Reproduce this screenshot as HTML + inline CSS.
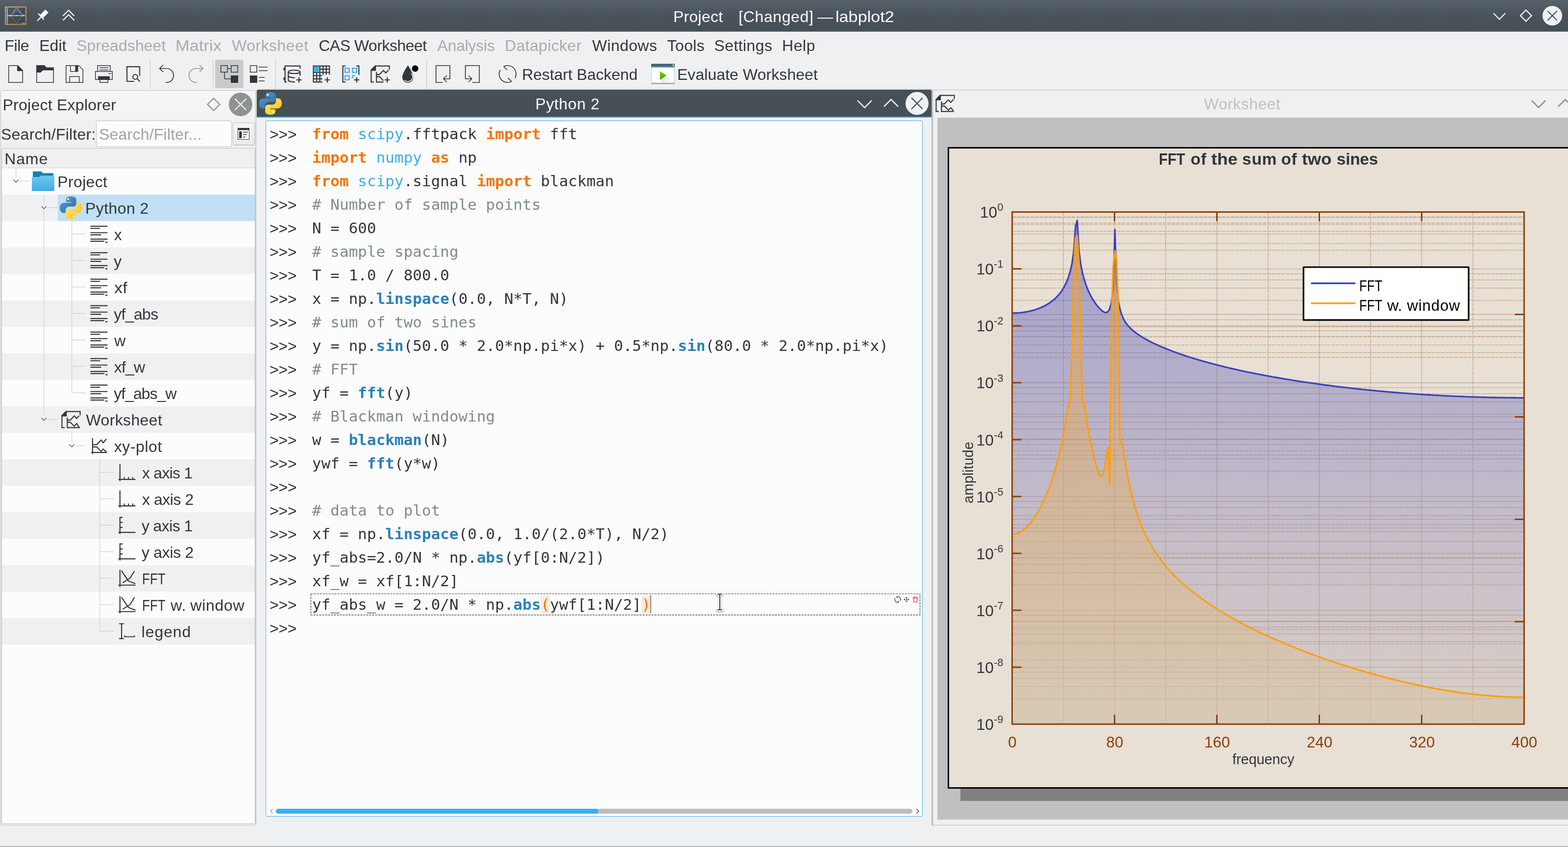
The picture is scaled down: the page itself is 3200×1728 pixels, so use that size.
<!DOCTYPE html><html><head><meta charset="utf-8"><title>Project [Changed] — labplot2</title>
<style>
html,body{margin:0;padding:0;}
body{width:3200px;height:1728px;overflow:hidden;background:#eff0f1;position:relative;}
div,svg.ic,span.t{position:absolute;}
span.t{white-space:pre;line-height:60px;height:60px;}
.fs{font-family:"Liberation Sans", sans-serif;}
.fm{font-family:"DejaVu Sans Mono", "Liberation Mono", monospace;}
sup{font-size:68%;line-height:0;vertical-align:baseline;position:relative;top:-0.64em;letter-spacing:0;}
b{font-weight:bold;}
</style></head><body>
<div id="root" style="left:0;top:0;width:3200px;height:1728px;will-change:transform;overflow:hidden">
<div style="left:0px;top:0px;width:3200px;height:64px;background:linear-gradient(#566169 0%,#4b545c 45%,#475057 85%);"></div>
<div style="left:0px;top:64px;width:3200px;height:1px;background:#3daee9;"></div>
<svg class="ic" style="left:10px;top:13px" width="44" height="38" viewBox="0 0 44 38"><defs><linearGradient id="ai" x1="0" y1="0" x2="1" y2="1"><stop offset="0" stop-color="#535c64"/><stop offset="1" stop-color="#383e45"/></linearGradient><linearGradient id="af" x1="0" y1="0" x2="1" y2="1"><stop offset="0" stop-color="#e0ad5e"/><stop offset="1" stop-color="#b8853e"/></linearGradient></defs><rect x="1.150" y="1.300" width="41.600" height="35.400" fill="url(#ai)" stroke="url(#af)" stroke-width="2.100"/><path d="M4.800 3.200V34.700" stroke="#b3b7ba" stroke-width="2" fill="none"/><path d="M5.5 18.84L6.2 18.81L7.0 18.77L7.8 18.70L8.5 18.61L9.2 18.47L10.0 18.30L10.8 18.06L11.5 17.75L12.2 17.36L13.0 16.87L13.8 16.27L14.5 15.55L15.2 14.72L16.0 13.77L16.8 12.71L17.5 11.57L18.2 10.37L19.0 9.15L19.8 7.96L20.5 6.84L21.2 5.84L22.0 5.01L22.8 4.39L23.5 4.02L24.2 3.90L25.0 4.05L25.8 4.46L26.5 5.11L27.2 5.97L28.0 6.98L28.8 8.12L29.5 9.32L30.2 10.53L31.0 11.72L31.8 12.86L32.5 13.90L33.2 14.84L34.0 15.66L34.8 16.36L35.5 16.94L36.2 17.42L37.0 17.80L37.8 18.10L38.5 18.32L39.2 18.49L40.0 18.62L40.8 18.71" stroke="#cfd2d4" stroke-width="1" fill="none"/><path d="M5.5 18.79L6.2 18.74L7.0 18.68L7.8 18.60L8.5 18.48L9.2 18.34L10.0 18.15L10.8 17.92L11.5 17.64L12.2 17.29L13.0 16.89L13.8 16.41L14.5 15.87L15.2 15.27L16.0 14.60L16.8 13.90L17.5 13.16L18.2 12.40L19.0 11.65L19.8 10.94L20.5 10.28L21.2 9.70L22.0 9.23L22.8 8.88L23.5 8.67L24.2 8.60L25.0 8.69L25.8 8.92L26.5 9.28L27.2 9.77L28.0 10.36L28.8 11.03L29.5 11.75L30.2 12.50L31.0 13.26L31.8 13.99L32.5 14.70L33.2 15.35L34.0 15.95L34.8 16.48L35.5 16.94L36.2 17.34L37.0 17.68L37.8 17.95L38.5 18.18L39.2 18.36L40.0 18.50L40.8 18.61" stroke="#4a90d9" stroke-width="1.300" fill="none"/><path d="M5.5 18.95L6.2 18.98L7.0 19.03L7.8 19.09L8.5 19.18L9.2 19.31L10.0 19.48L10.8 19.70L11.5 20.00L12.2 20.38L13.0 20.85L13.8 21.42L14.5 22.11L15.2 22.92L16.0 23.83L16.8 24.84L17.5 25.94L18.2 27.09L19.0 28.26L19.8 29.40L20.5 30.48L21.2 31.43L22.0 32.23L22.8 32.83L23.5 33.19L24.2 33.30L25.0 33.15L25.8 32.76L26.5 32.14L27.2 31.32L28.0 30.34L28.8 29.25L29.5 28.10L30.2 26.93L31.0 25.79L31.8 24.70L32.5 23.70L33.2 22.80L34.0 22.01L34.8 21.34L35.5 20.78L36.2 20.32L37.0 19.96L37.8 19.67L38.5 19.45L39.2 19.29L40.0 19.17L40.8 19.08" stroke="#8a8f93" stroke-width="1" fill="none"/><path d="M5 18.900H41M11.500 17.800v2.200M24.200 17.800v2.200M37 17.800v2.200" stroke="#e9eaeb" stroke-width="1.300" fill="none"/><rect x="31.900" y="33.300" width="3.900" height="1.500" fill="#2f8fe0"/><rect x="37" y="33.300" width="3.300" height="1.500" fill="#d7d9db"/></svg>
<svg class="ic" style="left:72px;top:16px" width="32" height="32" viewBox="0 0 32 32"><path d="M4 26.500L12.500 18" stroke="#fcfcfc" stroke-width="2.400" fill="none"/><path d="M6 11.500L17.500 24" stroke="#fcfcfc" stroke-width="2.400" fill="none"/><path d="M9.500 14.500L20.500 3.500L27 9.500L16 20.500z" fill="#fcfcfc"/></svg>
<svg class="ic" style="left:124px;top:16px" width="32" height="32" viewBox="0 0 32 32"><path d="M4.500 16.500L16 5L27.500 16.500M4.500 25.500L16 14L27.500 25.500" stroke="#fcfcfc" stroke-width="2.200" fill="none"/></svg>
<span class="t fs" style="top:3.51px;font-size:32px;color:#fcfcfc;letter-spacing:0.266px;left:1374px;">Project</span>
<span class="t fs" style="top:3.51px;font-size:32px;color:#fcfcfc;letter-spacing:0.602px;left:1507.3px;">[Changed]</span>
<span class="t fs" style="top:3.51px;font-size:32px;color:#fcfcfc;left:1668.3px;">—</span>
<span class="t fs" style="top:3.51px;font-size:32px;color:#fcfcfc;left:1705.16px;transform:scaleX(1.0686);transform-origin:0 50%;">labplot2</span>
<svg class="ic" style="left:3040px;top:12px" width="160" height="40" viewBox="0 0 160 40"><path d="M8 15L20 27.500L32 15" stroke="#fcfcfc" stroke-width="2.200" fill="none"/><path d="M74.200 8.500L85.500 20L74.200 31.500L63 20z" stroke="#fcfcfc" stroke-width="2.200" fill="none"/><circle cx="128" cy="20" r="20" fill="#eff0f1"/><path d="M118.500 10.500L137.500 29.500M137.500 10.500L118.500 29.500" stroke="#4a535b" stroke-width="2.200" fill="none"/></svg>
<span class="t fs" style="top:62.61px;font-size:32px;color:#31363b;letter-spacing:-0.555px;left:9.6px;">File</span>
<span class="t fs" style="top:62.61px;font-size:32px;color:#31363b;letter-spacing:0.05px;left:80.2px;">Edit</span>
<span class="t fs" style="top:62.61px;font-size:32px;color:#a8abad;letter-spacing:0.072px;left:156.2px;">Spreadsheet</span>
<span class="t fs" style="top:62.61px;font-size:32px;color:#a8abad;left:358.44px;transform:scaleX(1.0786);transform-origin:0 50%;">Matrix</span>
<span class="t fs" style="top:62.61px;font-size:32px;color:#a8abad;letter-spacing:0.429px;left:473.3px;">Worksheet</span>
<span class="t fs" style="top:62.61px;font-size:32px;color:#31363b;letter-spacing:-0.538px;left:650.5px;">CAS Worksheet</span>
<span class="t fs" style="top:62.61px;font-size:32px;color:#a8abad;letter-spacing:-0.265px;left:892.6px;">Analysis</span>
<span class="t fs" style="top:62.61px;font-size:32px;color:#a8abad;letter-spacing:0.378px;left:1030.2px;">Datapicker</span>
<span class="t fs" style="top:62.61px;font-size:32px;color:#31363b;letter-spacing:0.431px;left:1208.5px;">Windows</span>
<span class="t fs" style="top:62.61px;font-size:32px;color:#31363b;letter-spacing:0.374px;left:1361.6px;">Tools</span>
<span class="t fs" style="top:62.61px;font-size:32px;color:#31363b;letter-spacing:0.396px;left:1457.5px;">Settings</span>
<span class="t fs" style="top:62.61px;font-size:32px;color:#31363b;letter-spacing:0.561px;left:1596px;">Help</span>
<div style="left:305.9px;top:121px;width:1.2px;height:60px;background:#c2c4c6;"></div>
<div style="left:433.9px;top:121px;width:1.2px;height:60px;background:#c2c4c6;"></div>
<div style="left:561.9px;top:121px;width:1.2px;height:60px;background:#c2c4c6;"></div>
<div style="left:869.9px;top:121px;width:1.2px;height:60px;background:#c2c4c6;"></div>
<div style="left:439px;top:122px;width:58px;height:58px;background:#c9cacc;border-radius:3.500px;"></div>
<svg class="ic" style="left:8px;top:127px;" width="48" height="48" viewBox="0 0 32 32"><path d="M6 4v24h20V11l-7-7zm1 1h11v7h7v15H7z" fill="#31363b" fill-rule="evenodd" /></svg>
<svg class="ic" style="left:68px;top:127px;" width="48" height="48" viewBox="0 0 32 32"><path d="M4 4h11l3 3h10v21H4zM5 14v13h22V11H13l-3 3z" fill="#31363b" fill-rule="evenodd" /></svg>
<svg class="ic" style="left:128px;top:127px;" width="48" height="48" viewBox="0 0 32 32"><path d="M4 4H22L28 10V28H4ZM5 5V27H9V19H23V27H27V10.4L21.600 5H21V13H10V5ZM11 5H17V12H11ZM10 20H22V27H10Z" fill="#31363b" fill-rule="evenodd" /></svg>
<svg class="ic" style="left:188px;top:127px;" width="48" height="48" viewBox="0 0 32 32"><path d="M7 4h18v8h-1V5H8v7H7z" fill="#31363b" fill-rule="evenodd" /><path d="M4 12h24v12H4zM5 13v10h3v-4h16v4h3V13z" fill="#31363b" fill-rule="evenodd" /><path d="M10 24h1v3h10v-3h1v4H10z" fill="#31363b" fill-rule="evenodd" /><path d="M10 7h12v1H10zM10 10h12v1H10zM22 15h4v1h-4z" fill="#31363b" fill-rule="evenodd" /></svg>
<svg class="ic" style="left:248px;top:127px;" width="48" height="48" viewBox="0 0 48 48"><path d="M25.900 39H11.050V9.100H37.050V27.800" fill="none" stroke="#31363b" stroke-width="2.1" /><circle cx="28" cy="29.900" r="4.900" fill="none" stroke="#31363b" stroke-width="2.100"/><path d="M31.400 33.300L37.300 39.200" fill="none" stroke="#31363b" stroke-width="2.1" /></svg>
<svg class="ic" style="left:316px;top:127px;" width="48" height="48" viewBox="0 0 32 32"><path d="M11.200 3.800L6.500 8.500L11.200 13.200M6.500 8.500H16A9.500 9.500 0 0 1 16 27.500L14.700 27.400" fill="none" stroke="#31363b" stroke-width="1.15" /></svg>
<svg class="ic" style="left:376px;top:127px;" width="48" height="48" viewBox="0 0 32 32"><g transform="translate(32,0) scale(-1,1)"><path d="M11.200 3.800L6.500 8.500L11.200 13.200M6.500 8.500H16A9.500 9.500 0 0 1 16 27.500L14.700 27.400" fill="none" stroke="#909396" stroke-width="1.15" /></g></svg>
<svg class="ic" style="left:444px;top:127px;" width="48" height="48" viewBox="0 0 32 32"><path d="M4 4h10v10H4zM5 5v8h8V5zM18 4h10v10H18zM19 5v8h8V5zM18 18h10v10H18zM14 8h4v1h-4zM9 14h1v8h8v1H9z" fill="#31363b" fill-rule="evenodd" /></svg>
<svg class="ic" style="left:504px;top:127px;" width="48" height="48" viewBox="0 0 32 32"><path d="M4 4h10v10H4zM5 5v8h8V5zM4 18h10v10H4zM16 6h12v1H16zM16 11h12v1H16zM16 20h8v1h-8zM16 25h8v1h-8z" fill="#31363b" fill-rule="evenodd" /></svg>
<svg class="ic" style="left:572px;top:127px;" width="48" height="48" viewBox="0 0 22 22"><path d="M6 18.500H4.500V3.500H18.500V6" fill="none" stroke="#31363b" stroke-width="1" /><path d="M3 5h1.200v2.700H3zM3 14.100h1.200v2.700H3z" fill="#31363b" fill-rule="evenodd" /><ellipse cx="13" cy="9" rx="5.500" ry="1.550" fill="none" stroke="#31363b" stroke-width="1"/><path d="M7.500 9V16.500C7.500 17.600 10 18.450 13.800 18.450M7.500 12.500C7.500 13.600 10 14.450 13.800 14.450M18.500 9V12.700" fill="none" stroke="#31363b" stroke-width="1" /><path d="M15.0 16.5H20.0M17.5 14.0V19.0" fill="none" stroke="#31363b" stroke-width="1" /></svg>
<svg class="ic" style="left:632px;top:127px;" width="48" height="48" viewBox="0 0 22 22"><path d="M3 3h1V19h-1zM6 9h1V19h-1zM9 3h1V19h-1zM12 3h1V11.7h-1zM15 3h1V11.7h-1zM18 3h1V11.7h-1zM3 3H19v1H3zM9 6H19v1H9zM3 9H19v1H3zM3 12H11.8v1H3zM3 15H11.8v1H3zM3 18H11.8v1H3z" fill="#31363b"/><path d="M4 4h5v5H4z" fill="#3daee9" fill-rule="evenodd" /><path d="M14.0 16.5H19.0M16.5 14.0V19.0" fill="none" stroke="#31363b" stroke-width="1" /></svg>
<svg class="ic" style="left:692px;top:127px;" width="48" height="48" viewBox="0 0 22 22"><path d="M6 3.500H3.500V18.500H6M16.200 3.500H18.500V11.800" fill="none" stroke="#31363b" stroke-width="1" /><path d="M5.550 5.550h3.900v3.900h-3.900zM12.550 5.550h3.900v3.900h-3.900zM5.550 12.550h3.900v3.900h-3.900zM12.550 15V12.550H15" fill="none" stroke="#3daee9" stroke-width="1.1" /><path d="M14.0 16.5H19.0M16.5 14.0V19.0" fill="none" stroke="#31363b" stroke-width="1" /></svg>
<svg class="ic" style="left:752px;top:127px;" width="48" height="48" viewBox="0 0 22 22"><path d="M6 3L2 7v1h5V3z" fill="#31363b" fill-rule="evenodd" /><path d="M6.500 3.500H19.500V7M2.500 7.500V18.500H5" fill="none" stroke="#31363b" stroke-width="1" /><path d="M7.500 9V18.500H14M7.500 11.500H10.200L14 7.700L16.200 10L18.700 7.300M7.500 13.500H10.200L14 17.200" fill="none" stroke="#31363b" stroke-width="1" /><path d="M15.0 16.5H20.0M17.5 14.0V19.0" fill="none" stroke="#31363b" stroke-width="1" /></svg>
<svg class="ic" style="left:812px;top:127px;" width="48" height="48" viewBox="0 0 48 48"><path d="M20.600 6.300C20.600 6.300 9 22.500 9 30.600A11.200 11.200 0 0 0 31.400 30.600C31.400 22.500 20.600 6.300 20.600 6.300Z" fill="#31363b"/><path d="M13.200 36.600A9.600 9.600 0 0 0 27.200 22.600" fill="none" stroke="#eff0f1" stroke-width="1.500"/><circle cx="35.200" cy="12.800" r="6.600" fill="#000"/></svg>
<svg class="ic" style="left:880px;top:127px;" width="48" height="48" viewBox="0 0 32 32"><path d="M16 27.500H6.500V4.500H25.500V22.500H17M21.200 18L16.700 22.500L21.200 27" fill="none" stroke="#31363b" stroke-width="1.1" /></svg>
<svg class="ic" style="left:940px;top:127px;" width="48" height="48" viewBox="0 0 32 32"><path d="M16 27.500H25.500V4.500H6.500V22.500H15M10.800 18L15.300 22.500L10.800 27" fill="none" stroke="#31363b" stroke-width="1.1" /></svg>
<svg class="ic" style="left:1012px;top:127px;" width="48" height="48" viewBox="0 0 32 32"><path d="M10.60 5.85A11.500 11.500 0 0 1 26.01 21.66M21.54 26.08A11.500 11.500 0 0 1 5.97 10.37M10.60 5.85L15.700 10.500M16.400 21.600L21.54 26.08" fill="none" stroke="#31363b" stroke-width="1.1" /></svg>
<svg class="ic" style="left:1329px;top:127px;" width="48" height="48" viewBox="0 0 48 48"><defs><linearGradient id="rg" x1="0" y1="0" x2="0" y2="1"><stop offset="0" stop-color="#72da00"/><stop offset="1" stop-color="#3a9a00"/></linearGradient><linearGradient id="rs" x1="0" y1="0" x2="1" y2="1"><stop offset="0" stop-color="#000" stop-opacity=".16"/><stop offset="1" stop-color="#000" stop-opacity="0"/></linearGradient></defs><rect x="0.700" y="10" width="46.600" height="32.300" fill="#fff" stroke="#cfd4d8" stroke-width="1.400"/><rect x="0" y="3.100" width="48" height="5.800" fill="#525d67"/><rect x="0" y="8.800" width="48" height="2" fill="#3daee9"/><rect x="0" y="42.200" width="48" height="2.600" fill="#a3abb1"/><circle cx="45" cy="5.900" r="1.350" fill="#fcfcfc"/><path d="M17.800 36.100L31.100 27L41 37L35 42.200H24z" fill="url(#rs)"/><path d="M17.800 17.900V36.100L31.100 27z" fill="url(#rg)"/></svg>
<span class="t fs" style="top:121.71px;font-size:32px;color:#31363b;letter-spacing:-0.04px;left:1065.2px;">Restart Backend</span>
<span class="t fs" style="top:121.71px;font-size:32px;color:#31363b;letter-spacing:0.071px;left:1381.9px;">Evaluate Worksheet</span>
<div style="left:1902px;top:183px;width:1300px;height:1px;background:#b9bbbd;"></div>
<div style="left:1902px;top:184px;width:1px;height:1500px;background:#b9bbbd;"></div>
<div style="left:1902px;top:1683px;width:1300px;height:1px;background:#b9bbbd;"></div>
<svg class="ic" style="left:1905px;top:186.5px;" width="48" height="48" viewBox="0 0 22 22"><path d="M6 3L2 7v1h5V3z" fill="#31363b" fill-rule="evenodd" /><path d="M6.500 3.500H19.500V7M2.500 7.500V18.500H5" fill="none" stroke="#31363b" stroke-width="1" /><path d="M7.500 9V18.500H18.500V17.500M7.500 11.500H10.200L14 7.700L16.200 10L18.700 7.300M7.500 13.500H10.200L14 17.200L16.200 15L18.500 17.500" fill="none" stroke="#31363b" stroke-width="1" /></svg>
<span class="t fs" style="top:181.91px;font-size:32px;color:#bcc1c5;letter-spacing:0.466px;left:2456.9px;">Worksheet</span>
<svg class="ic" style="left:3110px;top:187px" width="90" height="48" viewBox="0 0 90 48"><path d="M16 18L30 32.500L44 18" stroke="#8b9194" stroke-width="2.600" fill="none"/><path d="M70 30.500L84.500 16L99 30.500" stroke="#8b9194" stroke-width="2.600" fill="none"/></svg>
<div style="left:1913px;top:240px;width:1287px;height:1432px;background:#c0c0c0;"></div>
<div style="left:1960px;top:1609px;width:1240px;height:25px;background:#808080;"></div>
<div style="left:1934px;top:300px;width:1280px;height:1309px;background:#e8e0d5;border:3px solid #000;box-sizing:border-box;"></div>
<svg class="ic" style="left:0;top:0" width="3200" height="1728" viewBox="0 0 3200 1728"><defs><linearGradient id="gb" gradientUnits="userSpaceOnUse" x1="0" y1="450" x2="0" y2="1477"><stop offset="0" stop-color="rgb(57,63,191)" stop-opacity=".4"/><stop offset="1" stop-color="rgb(196,183,177)" stop-opacity=".4"/></linearGradient><linearGradient id="go" gradientUnits="userSpaceOnUse" x1="0" y1="481" x2="0" y2="1477"><stop offset="0" stop-color="rgb(255,158,13)" stop-opacity=".4"/><stop offset="1" stop-color="rgb(214,192,156)" stop-opacity=".4"/></linearGradient><clipPath id="pc"><rect x="2065.6" y="432.5" width="1044.8000000000002" height="1044.8"/></clipPath></defs><path d="M2065.6 548.6H3110.4M2065.6 664.7H3110.4M2065.6 780.8H3110.4M2065.6 896.9H3110.4M2065.6 1012.9H3110.4M2065.6 1129.0H3110.4M2065.6 1245.1H3110.4M2065.6 1361.2H3110.4M2065.6 641.5H3110.4M2065.6 850.4H3110.4M2065.6 1059.4H3110.4M2065.6 1268.3H3110.4M2274.6 432.5V1477.3M2483.5 432.5V1477.3M2692.5 432.5V1477.3M2901.4 432.5V1477.3M2274.6 432.5V1477.3M2483.5 432.5V1477.3M2692.5 432.5V1477.3M2901.4 432.5V1477.3" stroke="rgba(150,80,20,0.36)" stroke-width="1.400" fill="none"/><path d="M2065.6 442.5H3110.4M2065.6 455.0H3110.4M2065.6 471.7H3110.4M2065.6 496.7H3110.4M2065.6 558.6H3110.4M2065.6 571.1H3110.4M2065.6 587.7H3110.4M2065.6 612.8H3110.4M2065.6 674.7H3110.4M2065.6 687.2H3110.4M2065.6 703.8H3110.4M2065.6 728.9H3110.4M2065.6 790.8H3110.4M2065.6 803.3H3110.4M2065.6 819.9H3110.4M2065.6 844.9H3110.4M2065.6 906.9H3110.4M2065.6 919.4H3110.4M2065.6 936.0H3110.4M2065.6 961.0H3110.4M2065.6 1022.9H3110.4M2065.6 1035.4H3110.4M2065.6 1052.1H3110.4M2065.6 1077.1H3110.4M2065.6 1139.0H3110.4M2065.6 1151.5H3110.4M2065.6 1168.2H3110.4M2065.6 1193.2H3110.4M2065.6 1255.1H3110.4M2065.6 1267.6H3110.4M2065.6 1284.3H3110.4M2065.6 1309.3H3110.4M2065.6 1371.2H3110.4M2065.6 1383.7H3110.4M2065.6 1400.4H3110.4M2065.6 1425.4H3110.4M2065.6 443.6H3110.4M2065.6 457.7H3110.4M2065.6 477.5H3110.4M2065.6 510.5H3110.4M2065.6 652.5H3110.4M2065.6 666.7H3110.4M2065.6 686.5H3110.4M2065.6 719.5H3110.4M2065.6 861.5H3110.4M2065.6 875.6H3110.4M2065.6 895.4H3110.4M2065.6 928.5H3110.4M2065.6 1070.4H3110.4M2065.6 1084.6H3110.4M2065.6 1104.4H3110.4M2065.6 1137.4H3110.4M2065.6 1279.4H3110.4M2065.6 1293.6H3110.4M2065.6 1313.4H3110.4M2065.6 1346.4H3110.4M2170.1 432.5V1477.3M2379.0 432.5V1477.3M2588.0 432.5V1477.3M2797.0 432.5V1477.3M3005.9 432.5V1477.3M2170.1 432.5V1477.3M2379.0 432.5V1477.3M2588.0 432.5V1477.3M2797.0 432.5V1477.3M3005.9 432.5V1477.3" stroke="rgba(150,80,20,0.36)" stroke-width="1.550" stroke-dasharray="7.750 1.550" fill="none"/><g clip-path="url(#pc)"><path d="M2065.6 1477.3L2065.6 638.7L2069.1 638.7L2072.6 638.6L2076.1 638.4L2079.6 638.2L2083.1 637.8L2086.6 637.4L2090.1 637.0L2093.6 636.4L2097.0 635.8L2100.5 635.0L2104.0 634.2L2107.5 633.3L2111.0 632.3L2114.5 631.2L2118.0 630.0L2121.5 628.7L2125.0 627.2L2128.5 625.6L2132.0 623.9L2135.5 622.0L2139.0 619.9L2142.5 617.6L2146.0 615.1L2149.5 612.4L2153.0 609.4L2156.5 606.0L2159.9 602.2L2163.4 598.0L2166.9 593.2L2170.4 587.7L2173.9 581.3L2177.4 573.7L2180.9 564.5L2184.4 552.7L2187.9 536.8L2191.4 512.6L2194.9 461.8L2198.4 449.8L2201.9 510.5L2205.4 537.8L2208.9 555.8L2212.4 569.3L2215.9 580.1L2219.3 589.3L2222.8 597.1L2226.3 604.0L2229.8 610.2L2233.3 615.7L2236.8 620.7L2240.3 625.2L2243.8 629.2L2247.3 632.6L2250.8 635.4L2254.3 637.2L2257.8 637.6L2261.3 635.7L2264.8 629.8L2268.3 616.7L2271.8 588.0L2275.3 468.3L2278.8 577.7L2282.2 612.7L2285.7 630.7L2289.2 642.1L2292.7 650.2L2296.2 656.5L2299.7 661.5L2303.2 665.7L2306.7 669.4L2310.2 672.7L2313.7 675.7L2317.2 678.4L2320.7 681.0L2324.2 683.4L2327.7 685.7L2331.2 687.9L2334.7 689.9L2338.2 691.9L2341.7 693.8L2345.1 695.7L2348.6 697.5L2352.1 699.2L2355.6 700.9L2359.1 702.5L2362.6 704.1L2366.1 705.7L2369.6 707.2L2373.1 708.7L2376.6 710.1L2380.1 711.6L2383.6 713.0L2387.1 714.3L2390.6 715.7L2394.1 717.0L2397.6 718.3L2401.1 719.5L2404.5 720.8L2408.0 722.0L2411.5 723.2L2415.0 724.4L2418.5 725.6L2422.0 726.7L2425.5 727.9L2429.0 729.0L2432.5 730.1L2436.0 731.1L2439.5 732.2L2443.0 733.3L2446.5 734.3L2450.0 735.3L2453.5 736.3L2457.0 737.3L2460.5 738.3L2464.0 739.3L2467.4 740.2L2470.9 741.2L2474.4 742.1L2477.9 743.0L2481.4 743.9L2484.9 744.8L2488.4 745.7L2491.9 746.6L2495.4 747.4L2498.9 748.3L2502.4 749.1L2505.9 750.0L2509.4 750.8L2512.9 751.6L2516.4 752.4L2519.9 753.2L2523.4 754.0L2526.8 754.8L2530.3 755.6L2533.8 756.3L2537.3 757.1L2540.8 757.8L2544.3 758.6L2547.8 759.3L2551.3 760.0L2554.8 760.7L2558.3 761.4L2561.8 762.1L2565.3 762.8L2568.8 763.5L2572.3 764.2L2575.8 764.9L2579.3 765.5L2582.8 766.2L2586.3 766.8L2589.7 767.5L2593.2 768.1L2596.7 768.8L2600.2 769.4L2603.7 770.0L2607.2 770.6L2610.7 771.2L2614.2 771.8L2617.7 772.4L2621.2 773.0L2624.7 773.6L2628.2 774.2L2631.7 774.7L2635.2 775.3L2638.7 775.9L2642.2 776.4L2645.7 777.0L2649.2 777.5L2652.6 778.1L2656.1 778.6L2659.6 779.1L2663.1 779.6L2666.6 780.2L2670.1 780.7L2673.6 781.2L2677.1 781.7L2680.6 782.2L2684.1 782.7L2687.6 783.2L2691.1 783.6L2694.6 784.1L2698.1 784.6L2701.6 785.1L2705.1 785.5L2708.6 786.0L2712.0 786.4L2715.5 786.9L2719.0 787.3L2722.5 787.8L2726.0 788.2L2729.5 788.6L2733.0 789.1L2736.5 789.5L2740.0 789.9L2743.5 790.3L2747.0 790.7L2750.5 791.1L2754.0 791.5L2757.5 791.9L2761.0 792.3L2764.5 792.7L2768.0 793.1L2771.5 793.5L2774.9 793.8L2778.4 794.2L2781.9 794.6L2785.4 794.9L2788.9 795.3L2792.4 795.6L2795.9 796.0L2799.4 796.3L2802.9 796.7L2806.4 797.0L2809.9 797.3L2813.4 797.7L2816.9 798.0L2820.4 798.3L2823.9 798.6L2827.4 799.0L2830.9 799.3L2834.3 799.6L2837.8 799.9L2841.3 800.2L2844.8 800.5L2848.3 800.7L2851.8 801.0L2855.3 801.3L2858.8 801.6L2862.3 801.9L2865.8 802.1L2869.3 802.4L2872.8 802.7L2876.3 802.9L2879.8 803.2L2883.3 803.4L2886.8 803.7L2890.3 803.9L2893.8 804.2L2897.2 804.4L2900.7 804.6L2904.2 804.8L2907.7 805.1L2911.2 805.3L2914.7 805.5L2918.2 805.7L2921.7 805.9L2925.2 806.1L2928.7 806.3L2932.2 806.5L2935.7 806.7L2939.2 806.9L2942.7 807.1L2946.2 807.3L2949.7 807.5L2953.2 807.6L2956.7 807.8L2960.1 808.0L2963.6 808.1L2967.1 808.3L2970.6 808.5L2974.1 808.6L2977.6 808.7L2981.1 808.9L2984.6 809.0L2988.1 809.2L2991.6 809.3L2995.1 809.4L2998.6 809.6L3002.1 809.7L3005.6 809.8L3009.1 809.9L3012.6 810.0L3016.1 810.1L3019.5 810.2L3023.0 810.3L3026.5 810.4L3030.0 810.5L3033.5 810.6L3037.0 810.7L3040.5 810.8L3044.0 810.9L3047.5 810.9L3051.0 811.0L3054.5 811.1L3058.0 811.1L3061.5 811.2L3065.0 811.2L3068.5 811.3L3072.0 811.3L3075.5 811.4L3079.0 811.4L3082.4 811.4L3085.9 811.5L3089.4 811.5L3092.9 811.5L3096.4 811.6L3099.9 811.6L3103.4 811.6L3106.9 811.6L3110.4 811.6L3110.4 1477.3Z" fill="url(#gb)"/><path d="M2065.6 638.7L2069.1 638.7L2072.6 638.6L2076.1 638.4L2079.6 638.2L2083.1 637.8L2086.6 637.4L2090.1 637.0L2093.6 636.4L2097.0 635.8L2100.5 635.0L2104.0 634.2L2107.5 633.3L2111.0 632.3L2114.5 631.2L2118.0 630.0L2121.5 628.7L2125.0 627.2L2128.5 625.6L2132.0 623.9L2135.5 622.0L2139.0 619.9L2142.5 617.6L2146.0 615.1L2149.5 612.4L2153.0 609.4L2156.5 606.0L2159.9 602.2L2163.4 598.0L2166.9 593.2L2170.4 587.7L2173.9 581.3L2177.4 573.7L2180.9 564.5L2184.4 552.7L2187.9 536.8L2191.4 512.6L2194.9 461.8L2198.4 449.8L2201.9 510.5L2205.4 537.8L2208.9 555.8L2212.4 569.3L2215.9 580.1L2219.3 589.3L2222.8 597.1L2226.3 604.0L2229.8 610.2L2233.3 615.7L2236.8 620.7L2240.3 625.2L2243.8 629.2L2247.3 632.6L2250.8 635.4L2254.3 637.2L2257.8 637.6L2261.3 635.7L2264.8 629.8L2268.3 616.7L2271.8 588.0L2275.3 468.3L2278.8 577.7L2282.2 612.7L2285.7 630.7L2289.2 642.1L2292.7 650.2L2296.2 656.5L2299.7 661.5L2303.2 665.7L2306.7 669.4L2310.2 672.7L2313.7 675.7L2317.2 678.4L2320.7 681.0L2324.2 683.4L2327.7 685.7L2331.2 687.9L2334.7 689.9L2338.2 691.9L2341.7 693.8L2345.1 695.7L2348.6 697.5L2352.1 699.2L2355.6 700.9L2359.1 702.5L2362.6 704.1L2366.1 705.7L2369.6 707.2L2373.1 708.7L2376.6 710.1L2380.1 711.6L2383.6 713.0L2387.1 714.3L2390.6 715.7L2394.1 717.0L2397.6 718.3L2401.1 719.5L2404.5 720.8L2408.0 722.0L2411.5 723.2L2415.0 724.4L2418.5 725.6L2422.0 726.7L2425.5 727.9L2429.0 729.0L2432.5 730.1L2436.0 731.1L2439.5 732.2L2443.0 733.3L2446.5 734.3L2450.0 735.3L2453.5 736.3L2457.0 737.3L2460.5 738.3L2464.0 739.3L2467.4 740.2L2470.9 741.2L2474.4 742.1L2477.9 743.0L2481.4 743.9L2484.9 744.8L2488.4 745.7L2491.9 746.6L2495.4 747.4L2498.9 748.3L2502.4 749.1L2505.9 750.0L2509.4 750.8L2512.9 751.6L2516.4 752.4L2519.9 753.2L2523.4 754.0L2526.8 754.8L2530.3 755.6L2533.8 756.3L2537.3 757.1L2540.8 757.8L2544.3 758.6L2547.8 759.3L2551.3 760.0L2554.8 760.7L2558.3 761.4L2561.8 762.1L2565.3 762.8L2568.8 763.5L2572.3 764.2L2575.8 764.9L2579.3 765.5L2582.8 766.2L2586.3 766.8L2589.7 767.5L2593.2 768.1L2596.7 768.8L2600.2 769.4L2603.7 770.0L2607.2 770.6L2610.7 771.2L2614.2 771.8L2617.7 772.4L2621.2 773.0L2624.7 773.6L2628.2 774.2L2631.7 774.7L2635.2 775.3L2638.7 775.9L2642.2 776.4L2645.7 777.0L2649.2 777.5L2652.6 778.1L2656.1 778.6L2659.6 779.1L2663.1 779.6L2666.6 780.2L2670.1 780.7L2673.6 781.2L2677.1 781.7L2680.6 782.2L2684.1 782.7L2687.6 783.2L2691.1 783.6L2694.6 784.1L2698.1 784.6L2701.6 785.1L2705.1 785.5L2708.6 786.0L2712.0 786.4L2715.5 786.9L2719.0 787.3L2722.5 787.8L2726.0 788.2L2729.5 788.6L2733.0 789.1L2736.5 789.5L2740.0 789.9L2743.5 790.3L2747.0 790.7L2750.5 791.1L2754.0 791.5L2757.5 791.9L2761.0 792.3L2764.5 792.7L2768.0 793.1L2771.5 793.5L2774.9 793.8L2778.4 794.2L2781.9 794.6L2785.4 794.9L2788.9 795.3L2792.4 795.6L2795.9 796.0L2799.4 796.3L2802.9 796.7L2806.4 797.0L2809.9 797.3L2813.4 797.7L2816.9 798.0L2820.4 798.3L2823.9 798.6L2827.4 799.0L2830.9 799.3L2834.3 799.6L2837.8 799.9L2841.3 800.2L2844.8 800.5L2848.3 800.7L2851.8 801.0L2855.3 801.3L2858.8 801.6L2862.3 801.9L2865.8 802.1L2869.3 802.4L2872.8 802.7L2876.3 802.9L2879.8 803.2L2883.3 803.4L2886.8 803.7L2890.3 803.9L2893.8 804.2L2897.2 804.4L2900.7 804.6L2904.2 804.8L2907.7 805.1L2911.2 805.3L2914.7 805.5L2918.2 805.7L2921.7 805.9L2925.2 806.1L2928.7 806.3L2932.2 806.5L2935.7 806.7L2939.2 806.9L2942.7 807.1L2946.2 807.3L2949.7 807.5L2953.2 807.6L2956.7 807.8L2960.1 808.0L2963.6 808.1L2967.1 808.3L2970.6 808.5L2974.1 808.6L2977.6 808.7L2981.1 808.9L2984.6 809.0L2988.1 809.2L2991.6 809.3L2995.1 809.4L2998.6 809.6L3002.1 809.7L3005.6 809.8L3009.1 809.9L3012.6 810.0L3016.1 810.1L3019.5 810.2L3023.0 810.3L3026.5 810.4L3030.0 810.5L3033.5 810.6L3037.0 810.7L3040.5 810.8L3044.0 810.9L3047.5 810.9L3051.0 811.0L3054.5 811.1L3058.0 811.1L3061.5 811.2L3065.0 811.2L3068.5 811.3L3072.0 811.3L3075.5 811.4L3079.0 811.4L3082.4 811.4L3085.9 811.5L3089.4 811.5L3092.9 811.5L3096.4 811.6L3099.9 811.6L3103.4 811.6L3106.9 811.6L3110.4 811.6" stroke="#3b41bf" stroke-width="3.300" fill="none" stroke-linejoin="round"/><path d="M2069.1 1477.3L2069.1 1089.9L2072.6 1089.3L2076.1 1088.2L2079.6 1086.8L2083.1 1084.9L2086.6 1082.6L2090.1 1079.9L2093.6 1076.8L2097.0 1073.3L2100.5 1069.5L2104.0 1065.3L2107.5 1060.7L2111.0 1055.7L2114.5 1050.3L2118.0 1044.6L2121.5 1038.4L2125.0 1031.9L2128.5 1024.9L2132.0 1017.5L2135.5 1009.5L2139.0 1001.1L2142.5 992.0L2146.0 982.3L2149.5 972.0L2153.0 960.8L2156.5 948.6L2159.9 935.4L2163.4 921.0L2166.9 905.1L2170.4 887.5L2173.9 867.9L2177.4 846.2L2180.9 823.7L2184.4 813.6L2187.9 706.7L2191.4 543.5L2194.9 484.4L2198.4 481.2L2201.9 532.3L2205.4 674.1L2208.9 818.3L2212.4 821.5L2215.9 844.0L2219.3 866.1L2222.8 886.1L2226.3 904.0L2229.8 920.3L2233.3 934.9L2236.8 948.1L2240.3 959.7L2243.8 968.5L2247.3 972.2L2250.8 967.4L2254.3 953.1L2257.8 932.3L2261.3 911.3L2264.8 990.0L2268.3 644.3L2271.8 543.0L2275.3 511.5L2278.8 532.2L2282.2 615.8L2285.7 899.8L2289.2 902.7L2292.7 920.6L2296.2 942.6L2299.7 962.8L2303.2 981.0L2306.7 997.2L2310.2 1011.8L2313.7 1025.0L2317.2 1037.0L2320.7 1048.0L2324.2 1058.1L2327.7 1067.4L2331.2 1076.0L2334.7 1084.1L2338.2 1091.6L2341.7 1098.6L2345.1 1105.3L2348.6 1111.5L2352.1 1117.5L2355.6 1123.1L2359.1 1128.4L2362.6 1133.5L2366.1 1138.4L2369.6 1143.1L2373.1 1147.6L2376.6 1151.9L2380.1 1156.1L2383.6 1160.2L2387.1 1164.1L2390.6 1167.8L2394.1 1171.5L2397.6 1175.1L2401.1 1178.5L2404.5 1181.9L2408.0 1185.2L2411.5 1188.4L2415.0 1191.5L2418.5 1194.6L2422.0 1197.6L2425.5 1200.5L2429.0 1203.4L2432.5 1206.2L2436.0 1209.0L2439.5 1211.7L2443.0 1214.3L2446.5 1217.0L2450.0 1219.5L2453.5 1222.1L2457.0 1224.5L2460.5 1227.0L2464.0 1229.4L2467.4 1231.8L2470.9 1234.1L2474.4 1236.4L2477.9 1238.7L2481.4 1240.9L2484.9 1243.1L2488.4 1245.3L2491.9 1247.4L2495.4 1249.6L2498.9 1251.7L2502.4 1253.7L2505.9 1255.8L2509.4 1257.8L2512.9 1259.8L2516.4 1261.8L2519.9 1263.7L2523.4 1265.6L2526.8 1267.5L2530.3 1269.4L2533.8 1271.3L2537.3 1273.1L2540.8 1275.0L2544.3 1276.8L2547.8 1278.6L2551.3 1280.3L2554.8 1282.1L2558.3 1283.8L2561.8 1285.6L2565.3 1287.3L2568.8 1289.0L2572.3 1290.6L2575.8 1292.3L2579.3 1293.9L2582.8 1295.6L2586.3 1297.2L2589.7 1298.8L2593.2 1300.3L2596.7 1301.9L2600.2 1303.5L2603.7 1305.0L2607.2 1306.5L2610.7 1308.1L2614.2 1309.6L2617.7 1311.1L2621.2 1312.5L2624.7 1314.0L2628.2 1315.5L2631.7 1316.9L2635.2 1318.3L2638.7 1319.8L2642.2 1321.2L2645.7 1322.6L2649.2 1323.9L2652.6 1325.3L2656.1 1326.7L2659.6 1328.0L2663.1 1329.4L2666.6 1330.7L2670.1 1332.0L2673.6 1333.4L2677.1 1334.7L2680.6 1336.0L2684.1 1337.2L2687.6 1338.5L2691.1 1339.8L2694.6 1341.0L2698.1 1342.3L2701.6 1343.5L2705.1 1344.7L2708.6 1345.9L2712.0 1347.1L2715.5 1348.3L2719.0 1349.5L2722.5 1350.7L2726.0 1351.9L2729.5 1353.0L2733.0 1354.2L2736.5 1355.3L2740.0 1356.5L2743.5 1357.6L2747.0 1358.7L2750.5 1359.8L2754.0 1360.9L2757.5 1362.0L2761.0 1363.1L2764.5 1364.2L2768.0 1365.2L2771.5 1366.3L2774.9 1367.3L2778.4 1368.4L2781.9 1369.4L2785.4 1370.4L2788.9 1371.4L2792.4 1372.4L2795.9 1373.4L2799.4 1374.4L2802.9 1375.4L2806.4 1376.4L2809.9 1377.3L2813.4 1378.3L2816.9 1379.2L2820.4 1380.2L2823.9 1381.1L2827.4 1382.0L2830.9 1382.9L2834.3 1383.8L2837.8 1384.7L2841.3 1385.6L2844.8 1386.5L2848.3 1387.3L2851.8 1388.2L2855.3 1389.0L2858.8 1389.9L2862.3 1390.7L2865.8 1391.5L2869.3 1392.3L2872.8 1393.1L2876.3 1393.9L2879.8 1394.7L2883.3 1395.5L2886.8 1396.2L2890.3 1397.0L2893.8 1397.7L2897.2 1398.5L2900.7 1399.2L2904.2 1399.9L2907.7 1400.6L2911.2 1401.3L2914.7 1402.0L2918.2 1402.7L2921.7 1403.4L2925.2 1404.0L2928.7 1404.7L2932.2 1405.3L2935.7 1405.9L2939.2 1406.5L2942.7 1407.1L2946.2 1407.7L2949.7 1408.3L2953.2 1408.9L2956.7 1409.5L2960.1 1410.0L2963.6 1410.5L2967.1 1411.1L2970.6 1411.6L2974.1 1412.1L2977.6 1412.6L2981.1 1413.1L2984.6 1413.6L2988.1 1414.0L2991.6 1414.5L2995.1 1414.9L2998.6 1415.3L3002.1 1415.7L3005.6 1416.2L3009.1 1416.5L3012.6 1416.9L3016.1 1417.3L3019.5 1417.6L3023.0 1418.0L3026.5 1418.3L3030.0 1418.6L3033.5 1418.9L3037.0 1419.2L3040.5 1419.5L3044.0 1419.8L3047.5 1420.0L3051.0 1420.3L3054.5 1420.5L3058.0 1420.7L3061.5 1420.9L3065.0 1421.1L3068.5 1421.3L3072.0 1421.5L3075.5 1421.6L3079.0 1421.7L3082.4 1421.9L3085.9 1422.0L3089.4 1422.1L3092.9 1422.2L3096.4 1422.2L3099.9 1422.3L3103.4 1422.4L3106.9 1422.4L3110.4 1422.4L3110.4 1477.3Z" fill="url(#go)"/><path d="M2069.1 1089.9L2072.6 1089.3L2076.1 1088.2L2079.6 1086.8L2083.1 1084.9L2086.6 1082.6L2090.1 1079.9L2093.6 1076.8L2097.0 1073.3L2100.5 1069.5L2104.0 1065.3L2107.5 1060.7L2111.0 1055.7L2114.5 1050.3L2118.0 1044.6L2121.5 1038.4L2125.0 1031.9L2128.5 1024.9L2132.0 1017.5L2135.5 1009.5L2139.0 1001.1L2142.5 992.0L2146.0 982.3L2149.5 972.0L2153.0 960.8L2156.5 948.6L2159.9 935.4L2163.4 921.0L2166.9 905.1L2170.4 887.5L2173.9 867.9L2177.4 846.2L2180.9 823.7L2184.4 813.6L2187.9 706.7L2191.4 543.5L2194.9 484.4L2198.4 481.2L2201.9 532.3L2205.4 674.1L2208.9 818.3L2212.4 821.5L2215.9 844.0L2219.3 866.1L2222.8 886.1L2226.3 904.0L2229.8 920.3L2233.3 934.9L2236.8 948.1L2240.3 959.7L2243.8 968.5L2247.3 972.2L2250.8 967.4L2254.3 953.1L2257.8 932.3L2261.3 911.3L2264.8 990.0L2268.3 644.3L2271.8 543.0L2275.3 511.5L2278.8 532.2L2282.2 615.8L2285.7 899.8L2289.2 902.7L2292.7 920.6L2296.2 942.6L2299.7 962.8L2303.2 981.0L2306.7 997.2L2310.2 1011.8L2313.7 1025.0L2317.2 1037.0L2320.7 1048.0L2324.2 1058.1L2327.7 1067.4L2331.2 1076.0L2334.7 1084.1L2338.2 1091.6L2341.7 1098.6L2345.1 1105.3L2348.6 1111.5L2352.1 1117.5L2355.6 1123.1L2359.1 1128.4L2362.6 1133.5L2366.1 1138.4L2369.6 1143.1L2373.1 1147.6L2376.6 1151.9L2380.1 1156.1L2383.6 1160.2L2387.1 1164.1L2390.6 1167.8L2394.1 1171.5L2397.6 1175.1L2401.1 1178.5L2404.5 1181.9L2408.0 1185.2L2411.5 1188.4L2415.0 1191.5L2418.5 1194.6L2422.0 1197.6L2425.5 1200.5L2429.0 1203.4L2432.5 1206.2L2436.0 1209.0L2439.5 1211.7L2443.0 1214.3L2446.5 1217.0L2450.0 1219.5L2453.5 1222.1L2457.0 1224.5L2460.5 1227.0L2464.0 1229.4L2467.4 1231.8L2470.9 1234.1L2474.4 1236.4L2477.9 1238.7L2481.4 1240.9L2484.9 1243.1L2488.4 1245.3L2491.9 1247.4L2495.4 1249.6L2498.9 1251.7L2502.4 1253.7L2505.9 1255.8L2509.4 1257.8L2512.9 1259.8L2516.4 1261.8L2519.9 1263.7L2523.4 1265.6L2526.8 1267.5L2530.3 1269.4L2533.8 1271.3L2537.3 1273.1L2540.8 1275.0L2544.3 1276.8L2547.8 1278.6L2551.3 1280.3L2554.8 1282.1L2558.3 1283.8L2561.8 1285.6L2565.3 1287.3L2568.8 1289.0L2572.3 1290.6L2575.8 1292.3L2579.3 1293.9L2582.8 1295.6L2586.3 1297.2L2589.7 1298.8L2593.2 1300.3L2596.7 1301.9L2600.2 1303.5L2603.7 1305.0L2607.2 1306.5L2610.7 1308.1L2614.2 1309.6L2617.7 1311.1L2621.2 1312.5L2624.7 1314.0L2628.2 1315.5L2631.7 1316.9L2635.2 1318.3L2638.7 1319.8L2642.2 1321.2L2645.7 1322.6L2649.2 1323.9L2652.6 1325.3L2656.1 1326.7L2659.6 1328.0L2663.1 1329.4L2666.6 1330.7L2670.1 1332.0L2673.6 1333.4L2677.1 1334.7L2680.6 1336.0L2684.1 1337.2L2687.6 1338.5L2691.1 1339.8L2694.6 1341.0L2698.1 1342.3L2701.6 1343.5L2705.1 1344.7L2708.6 1345.9L2712.0 1347.1L2715.5 1348.3L2719.0 1349.5L2722.5 1350.7L2726.0 1351.9L2729.5 1353.0L2733.0 1354.2L2736.5 1355.3L2740.0 1356.5L2743.5 1357.6L2747.0 1358.7L2750.5 1359.8L2754.0 1360.9L2757.5 1362.0L2761.0 1363.1L2764.5 1364.2L2768.0 1365.2L2771.5 1366.3L2774.9 1367.3L2778.4 1368.4L2781.9 1369.4L2785.4 1370.4L2788.9 1371.4L2792.4 1372.4L2795.9 1373.4L2799.4 1374.4L2802.9 1375.4L2806.4 1376.4L2809.9 1377.3L2813.4 1378.3L2816.9 1379.2L2820.4 1380.2L2823.9 1381.1L2827.4 1382.0L2830.9 1382.9L2834.3 1383.8L2837.8 1384.7L2841.3 1385.6L2844.8 1386.5L2848.3 1387.3L2851.8 1388.2L2855.3 1389.0L2858.8 1389.9L2862.3 1390.7L2865.8 1391.5L2869.3 1392.3L2872.8 1393.1L2876.3 1393.9L2879.8 1394.7L2883.3 1395.5L2886.8 1396.2L2890.3 1397.0L2893.8 1397.7L2897.2 1398.5L2900.7 1399.2L2904.2 1399.9L2907.7 1400.6L2911.2 1401.3L2914.7 1402.0L2918.2 1402.7L2921.7 1403.4L2925.2 1404.0L2928.7 1404.7L2932.2 1405.3L2935.7 1405.9L2939.2 1406.5L2942.7 1407.1L2946.2 1407.7L2949.7 1408.3L2953.2 1408.9L2956.7 1409.5L2960.1 1410.0L2963.6 1410.5L2967.1 1411.1L2970.6 1411.6L2974.1 1412.1L2977.6 1412.6L2981.1 1413.1L2984.6 1413.6L2988.1 1414.0L2991.6 1414.5L2995.1 1414.9L2998.6 1415.3L3002.1 1415.7L3005.6 1416.2L3009.1 1416.5L3012.6 1416.9L3016.1 1417.3L3019.5 1417.6L3023.0 1418.0L3026.5 1418.3L3030.0 1418.6L3033.5 1418.9L3037.0 1419.2L3040.5 1419.5L3044.0 1419.8L3047.5 1420.0L3051.0 1420.3L3054.5 1420.5L3058.0 1420.7L3061.5 1420.9L3065.0 1421.1L3068.5 1421.3L3072.0 1421.5L3075.5 1421.6L3079.0 1421.7L3082.4 1421.9L3085.9 1422.0L3089.4 1422.1L3092.9 1422.2L3096.4 1422.2L3099.9 1422.3L3103.4 1422.4L3106.9 1422.4L3110.4 1422.4" stroke="#ff9e0d" stroke-width="3.300" fill="none" stroke-linejoin="round"/></g><path d="M2274.6 432.5v19M2274.6 1477.3v-19M2483.5 432.5v19M2483.5 1477.3v-19M2692.5 432.5v19M2692.5 1477.3v-19M2901.4 432.5v19M2901.4 1477.3v-19M2065.6 548.6h19M2065.6 664.7h19M2065.6 780.8h19M2065.6 896.9h19M2065.6 1012.9h19M2065.6 1129.0h19M2065.6 1245.1h19M2065.6 1361.2h19M3110.4 641.5h-19M3110.4 850.4h-19M3110.4 1059.4h-19M3110.4 1268.3h-19" stroke="#8b4006" stroke-width="3" fill="none"/><rect x="2065.6" y="432.5" width="1044.8000000000002" height="1044.8" stroke="#8b4006" stroke-width="3" fill="none"/><rect x="2660.200" y="545" width="337" height="107.800" fill="#fff" stroke="#000" stroke-width="3.200" stroke-linejoin="round"/><path d="M2675.500 578H2766" stroke="#3b41bf" stroke-width="3.400"/><path d="M2675.500 618.800H2766" stroke="#ff9e0d" stroke-width="3.400"/></svg>
<span class="t fs" style="top:553.56px;font-size:31px;color:#000;left:2773.54px;transform:scaleX(0.8310);transform-origin:0 50%;">FFT</span>
<span class="t fs" style="top:593.96px;font-size:31px;color:#000;left:2773.54px;transform:scaleX(0.8310);transform-origin:0 50%;">FFT</span>
<span class="t fs" style="top:593.96px;font-size:31px;color:#000;left:2831.14px;transform:scaleX(1.0442);transform-origin:0 50%;">w.</span>
<span class="t fs" style="top:593.96px;font-size:31px;color:#000;letter-spacing:0.921px;left:2871.5px;">window</span>
<span class="t fs" style="top:294.56px;font-size:33.6px;color:#31363b;font-weight:bold;left:2365.45px;transform:scaleX(0.8730);transform-origin:0 50%;">FFT</span>
<span class="t fs" style="top:294.56px;font-size:33.6px;color:#31363b;font-weight:bold;letter-spacing:0.389px;left:2429.8px;">of</span>
<span class="t fs" style="top:294.56px;font-size:33.6px;color:#31363b;font-weight:bold;left:2472.0px;transform:scaleX(1.0625);transform-origin:0 50%;">the</span>
<span class="t fs" style="top:294.56px;font-size:33.6px;color:#31363b;font-weight:bold;letter-spacing:0.707px;left:2535px;">sum</span>
<span class="t fs" style="top:294.56px;font-size:33.6px;color:#31363b;font-weight:bold;letter-spacing:0.489px;left:2614.6px;">of</span>
<span class="t fs" style="top:294.56px;font-size:33.6px;color:#31363b;font-weight:bold;left:2657.4px;transform:scaleX(1.0489);transform-origin:0 50%;">two</span>
<span class="t fs" style="top:294.56px;font-size:33.6px;color:#31363b;font-weight:bold;letter-spacing:-0.322px;left:2727.8px;">sines</span>
<span class="t fs" style="top:403.21px;font-size:32px;color:#31363b;left:2047.5px;transform:translateX(-100%);">10<sup>0</sup></span>
<span class="t fs" style="top:519.30px;font-size:32px;color:#31363b;left:2047.5px;transform:translateX(-100%);">10<sup>-1</sup></span>
<span class="t fs" style="top:635.39px;font-size:32px;color:#31363b;left:2047.5px;transform:translateX(-100%);">10<sup>-2</sup></span>
<span class="t fs" style="top:751.48px;font-size:32px;color:#31363b;left:2047.5px;transform:translateX(-100%);">10<sup>-3</sup></span>
<span class="t fs" style="top:867.57px;font-size:32px;color:#31363b;left:2047.5px;transform:translateX(-100%);">10<sup>-4</sup></span>
<span class="t fs" style="top:983.66px;font-size:32px;color:#31363b;left:2047.5px;transform:translateX(-100%);">10<sup>-5</sup></span>
<span class="t fs" style="top:1099.75px;font-size:32px;color:#31363b;left:2047.5px;transform:translateX(-100%);">10<sup>-6</sup></span>
<span class="t fs" style="top:1215.83px;font-size:32px;color:#31363b;left:2047.5px;transform:translateX(-100%);">10<sup>-7</sup></span>
<span class="t fs" style="top:1331.92px;font-size:32px;color:#31363b;left:2047.5px;transform:translateX(-100%);">10<sup>-8</sup></span>
<span class="t fs" style="top:1448.01px;font-size:32px;color:#31363b;left:2047.5px;transform:translateX(-100%);">10<sup>-9</sup></span>
<span class="t fs" style="top:1484.19px;font-size:31.5px;color:#8b4006;left:2066.1px;transform:translateX(-50%);">0</span>
<span class="t fs" style="top:1484.19px;font-size:31.5px;color:#8b4006;left:2275.06px;transform:translateX(-50%);">80</span>
<span class="t fs" style="top:1484.19px;font-size:31.5px;color:#8b4006;left:2484.02px;transform:translateX(-50%);">160</span>
<span class="t fs" style="top:1484.19px;font-size:31.5px;color:#8b4006;left:2692.98px;transform:translateX(-50%);">240</span>
<span class="t fs" style="top:1484.19px;font-size:31.5px;color:#8b4006;left:2901.94px;transform:translateX(-50%);">320</span>
<span class="t fs" style="top:1484.19px;font-size:31.5px;color:#8b4006;left:3110.9px;transform:translateX(-50%);">400</span>
<span class="t fs" style="top:1518.75px;font-size:29px;color:#31363b;letter-spacing:-0.12px;left:2515.1px;">frequency</span>
<span class="t fs" style="left:1976px;top:964px;font-size:29px;color:#31363b;transform:translate(-50%,-50%) rotate(-90deg);">amplitude</span>
<div style="left:524px;top:183px;width:1377px;height:1501px;background:#eff0f1;border-radius:3px 3px 0 0;box-shadow:1px 1px 5px rgba(0,0,0,.35);"></div>
<div style="left:524px;top:183px;width:1377px;height:55px;background:#475057;border-radius:3px 3px 0 0;"></div>
<div style="left:524px;top:238px;width:1377px;height:1.5px;background:#3daee9;"></div>
<svg class="ic" style="left:527.5px;top:186.5px;" width="48" height="48" viewBox="0 0 22 22"><defs><linearGradient id="pb" x1="0" y1="0" x2="1" y2="1"><stop offset="0" stop-color="#5a9fd4"/><stop offset="1" stop-color="#306998"/></linearGradient><linearGradient id="py" x1="0" y1="0" x2="1" y2="1"><stop offset="0" stop-color="#ffe873"/><stop offset="1" stop-color="#ffc20e"/></linearGradient></defs><path d="M10.900 0.400C8.200 0.400 6.400 1.400 6.400 3.200V5.600h4.700v.7H4.400C2.100 6.300 0.400 8 0.400 11s1.500 4.800 3.600 4.800h1.900v-2.600c0-1.900 1.500-3.400 3.400-3.400h3.900c1.500 0 2.700-1.200 2.700-2.700V3.200c0-1.600-1.900-2.800-5-2.800z" fill="url(#pb)"/><circle cx="8.400" cy="3" r="0.950" fill="#fff"/><path d="M11.100 21.600c2.700 0 4.500-1 4.500-2.800v-2.400h-4.700v-.7h6.700c2.300 0 4-1.700 4-4.700s-1.500-4.800-3.600-4.800h-1.900v2.600c0 1.900-1.500 3.400-3.400 3.400H8.800c-1.500 0-2.700 1.200-2.700 2.700v3.900c0 1.600 1.900 2.800 5 2.800z" fill="url(#py)"/><circle cx="13.600" cy="19" r="0.950" fill="#fff"/></svg>
<span class="t fs" style="top:181.91px;font-size:32px;color:#fcfcfc;letter-spacing:0.641px;left:1092.4px;">Python 2</span>
<svg class="ic" style="left:1740px;top:187px" width="160" height="48" viewBox="0 0 160 48"><path d="M10 18L24.500 32.500L39 18" stroke="#fcfcfc" stroke-width="2.400" fill="none"/><path d="M64 30.500L78.500 16L93 30.500" stroke="#fcfcfc" stroke-width="2.400" fill="none"/><circle cx="131.500" cy="24" r="23.500" fill="#eff0f1"/><path d="M120 12.500L143 35.500M143 12.500L120 35.500" stroke="#475057" stroke-width="2.400" fill="none"/></svg>
<div style="left:542px;top:246px;width:1341px;height:1420px;background:#fcfcfc;border:1px solid #3daee9;box-sizing:border-box;border-radius:3px;"></div>
<span class="t fs" style="top:244.01px;font-size:32px;color:#31363b;letter-spacing:-0.3px;left:550.2px;">&gt;&gt;&gt;</span>
<span class="t fm" style="top:243.17px;font-size:31px;color:#31363b;left:637.0px;"><b style="color:#f67400">from</b> <span style="color:#3daee9">scipy</span>.fftpack <b style="color:#f67400">import</b> fft</span>
<span class="t fs" style="top:292.01px;font-size:32px;color:#31363b;letter-spacing:-0.3px;left:550.2px;">&gt;&gt;&gt;</span>
<span class="t fm" style="top:291.17px;font-size:31px;color:#31363b;left:637.0px;"><b style="color:#f67400">import</b> <span style="color:#3daee9">numpy</span> <b style="color:#f67400">as</b> np</span>
<span class="t fs" style="top:340.01px;font-size:32px;color:#31363b;letter-spacing:-0.3px;left:550.2px;">&gt;&gt;&gt;</span>
<span class="t fm" style="top:339.17px;font-size:31px;color:#31363b;left:637.0px;"><b style="color:#f67400">from</b> <span style="color:#3daee9">scipy</span>.signal <b style="color:#f67400">import</b> blackman</span>
<span class="t fs" style="top:388.01px;font-size:32px;color:#31363b;letter-spacing:-0.3px;left:550.2px;">&gt;&gt;&gt;</span>
<span class="t fm" style="top:387.17px;font-size:31px;color:#31363b;left:637.0px;"><span style="color:#7f8c8d"># Number of sample points</span></span>
<span class="t fs" style="top:436.01px;font-size:32px;color:#31363b;letter-spacing:-0.3px;left:550.2px;">&gt;&gt;&gt;</span>
<span class="t fm" style="top:435.17px;font-size:31px;color:#31363b;left:637.0px;">N = 600</span>
<span class="t fs" style="top:484.01px;font-size:32px;color:#31363b;letter-spacing:-0.3px;left:550.2px;">&gt;&gt;&gt;</span>
<span class="t fm" style="top:483.17px;font-size:31px;color:#31363b;left:637.0px;"><span style="color:#7f8c8d"># sample spacing</span></span>
<span class="t fs" style="top:532.01px;font-size:32px;color:#31363b;letter-spacing:-0.3px;left:550.2px;">&gt;&gt;&gt;</span>
<span class="t fm" style="top:531.17px;font-size:31px;color:#31363b;left:637.0px;">T = 1.0 / 800.0</span>
<span class="t fs" style="top:580.01px;font-size:32px;color:#31363b;letter-spacing:-0.3px;left:550.2px;">&gt;&gt;&gt;</span>
<span class="t fm" style="top:579.17px;font-size:31px;color:#31363b;left:637.0px;">x = np.<b style="color:#2980b9">linspace</b>(0.0, N*T, N)</span>
<span class="t fs" style="top:628.01px;font-size:32px;color:#31363b;letter-spacing:-0.3px;left:550.2px;">&gt;&gt;&gt;</span>
<span class="t fm" style="top:627.17px;font-size:31px;color:#31363b;left:637.0px;"><span style="color:#7f8c8d"># sum of two sines</span></span>
<span class="t fs" style="top:676.01px;font-size:32px;color:#31363b;letter-spacing:-0.3px;left:550.2px;">&gt;&gt;&gt;</span>
<span class="t fm" style="top:675.17px;font-size:31px;color:#31363b;left:637.0px;">y = np.<b style="color:#2980b9">sin</b>(50.0 * 2.0*np.pi*x) + 0.5*np.<b style="color:#2980b9">sin</b>(80.0 * 2.0*np.pi*x)</span>
<span class="t fs" style="top:724.01px;font-size:32px;color:#31363b;letter-spacing:-0.3px;left:550.2px;">&gt;&gt;&gt;</span>
<span class="t fm" style="top:723.17px;font-size:31px;color:#31363b;left:637.0px;"><span style="color:#7f8c8d"># FFT</span></span>
<span class="t fs" style="top:772.01px;font-size:32px;color:#31363b;letter-spacing:-0.3px;left:550.2px;">&gt;&gt;&gt;</span>
<span class="t fm" style="top:771.17px;font-size:31px;color:#31363b;left:637.0px;">yf = <b style="color:#2980b9">fft</b>(y)</span>
<span class="t fs" style="top:820.01px;font-size:32px;color:#31363b;letter-spacing:-0.3px;left:550.2px;">&gt;&gt;&gt;</span>
<span class="t fm" style="top:819.17px;font-size:31px;color:#31363b;left:637.0px;"><span style="color:#7f8c8d"># Blackman windowing</span></span>
<span class="t fs" style="top:868.01px;font-size:32px;color:#31363b;letter-spacing:-0.3px;left:550.2px;">&gt;&gt;&gt;</span>
<span class="t fm" style="top:867.17px;font-size:31px;color:#31363b;left:637.0px;">w = <b style="color:#2980b9">blackman</b>(N)</span>
<span class="t fs" style="top:916.01px;font-size:32px;color:#31363b;letter-spacing:-0.3px;left:550.2px;">&gt;&gt;&gt;</span>
<span class="t fm" style="top:915.17px;font-size:31px;color:#31363b;left:637.0px;">ywf = <b style="color:#2980b9">fft</b>(y*w)</span>
<span class="t fs" style="top:964.01px;font-size:32px;color:#31363b;letter-spacing:-0.3px;left:550.2px;">&gt;&gt;&gt;</span>
<span class="t fs" style="top:1012.01px;font-size:32px;color:#31363b;letter-spacing:-0.3px;left:550.2px;">&gt;&gt;&gt;</span>
<span class="t fm" style="top:1011.17px;font-size:31px;color:#31363b;left:637.0px;"><span style="color:#7f8c8d"># data to plot</span></span>
<span class="t fs" style="top:1060.01px;font-size:32px;color:#31363b;letter-spacing:-0.3px;left:550.2px;">&gt;&gt;&gt;</span>
<span class="t fm" style="top:1059.17px;font-size:31px;color:#31363b;left:637.0px;">xf = np.<b style="color:#2980b9">linspace</b>(0.0, 1.0/(2.0*T), N/2)</span>
<span class="t fs" style="top:1108.01px;font-size:32px;color:#31363b;letter-spacing:-0.3px;left:550.2px;">&gt;&gt;&gt;</span>
<span class="t fm" style="top:1107.17px;font-size:31px;color:#31363b;left:637.0px;">yf_abs=2.0/N * np.<b style="color:#2980b9">abs</b>(yf[0:N/2])</span>
<span class="t fs" style="top:1156.01px;font-size:32px;color:#31363b;letter-spacing:-0.3px;left:550.2px;">&gt;&gt;&gt;</span>
<span class="t fm" style="top:1155.17px;font-size:31px;color:#31363b;left:637.0px;">xf_w = xf[1:N/2]</span>
<span class="t fs" style="top:1204.01px;font-size:32px;color:#31363b;letter-spacing:-0.3px;left:550.2px;">&gt;&gt;&gt;</span>
<span class="t fm" style="top:1203.17px;font-size:31px;color:#31363b;left:637.0px;">yf_abs_w = 2.0/N * np.<b style="color:#2980b9">abs</b><span style="color:#f67400;background:#fdeadb">(</span>ywf[1:N/2]<span style="color:#f67400;background:#fdeadb">)</span></span>
<span class="t fs" style="top:1252.01px;font-size:32px;color:#31363b;letter-spacing:-0.3px;left:550.2px;">&gt;&gt;&gt;</span>
<svg class="ic" style="left:0;top:1190px" width="1900" height="90" viewBox="0 1190 1900 90"><defs><filter id="cs" x="-100%" y="-30%" width="300%" height="170%"><feGaussianBlur stdDeviation="1.6"/></filter></defs><rect x="634.500" y="1211.500" width="1243" height="43.100" fill="none" stroke="#31363b" stroke-width="1.200" stroke-dasharray="4 2"/><path d="M1328 1214.500V1251" stroke="#31363b" stroke-width="1.200"/><path d="M1464 1213.500h3.500q1.500 0 1.500 1.500q0 -1.500 1.500 -1.500h3.500M1469 1214.500V1243.500M1464 1245.500h3.500q1.500 0 1.500 -1.500q0 1.500 1.500 1.500h3.500" stroke="#000" stroke-opacity=".35" stroke-width="6" fill="none" filter="url(#cs)" stroke-linecap="round"/><path d="M1464 1212h3.500q1.500 0 1.500 1.500q0 -1.500 1.500 -1.500h3.500M1469 1213V1243M1464 1244h3.500q1.500 0 1.500 -1.500q0 1.500 1.500 1.500h3.500" stroke="#fff" stroke-width="5.600" fill="none" stroke-linecap="round" stroke-linejoin="round"/><path d="M1464 1212h3.500q1.500 0 1.500 1.500q0 -1.500 1.500 -1.500h3.500M1469 1213V1243M1464 1244h3.500q1.500 0 1.500 -1.500q0 1.500 1.500 1.500h3.500" stroke="#3a3a3a" stroke-width="2" fill="none"/><g fill="none" stroke="#31363b" stroke-width="1.300"><path d="M1826.700 1220.300A6 6 0 0 0 1834.500 1228.500M1837.300 1225.700A6 6 0 0 0 1829.500 1217.500M1829.500 1217.500l2.300 2.500M1834.500 1228.500l-2.300 -2.500"/></g><path d="M1850 1217.200l2.200 3h-4.400zM1850 1228.800l2.200 -3h-4.400zM1844.200 1223l3 -2.200v4.400zM1855.800 1223l-3 -2.200v4.400zM1849 1222h2v2h-2z" fill="#31363b"/><path d="M1862 1220.400h12M1865.300 1220v-2.400h5.700v2.400M1864.600 1220.400v8h7v-8" fill="none" stroke="#da4453" stroke-width="1.400"/></svg>
<div style="left:563px;top:1650px;width:1299px;height:10px;background:#bcbdbf;border-radius:5px;"></div>
<div style="left:563px;top:1650px;width:658px;height:10px;background:#3daee9;border-radius:5px;"></div>
<svg class="ic" style="left:548px;top:1646px" width="1334" height="18" viewBox="0 0 1334 18"><path d="M8.500 4.500L4 9l4.500 4.500" stroke="#8b8e90" stroke-width="1.200" fill="none"/><path d="M1322.500 4.500L1327 9l-4.500 4.500" stroke="#31363b" stroke-width="1.200" fill="none"/></svg>
<div style="left:1px;top:184px;width:521px;height:1500px;border:1px solid #bcbec0;box-sizing:border-box;border-radius:3px;background:#f4f5f5;"></div>
<div style="left:2px;top:185px;width:519px;height:60px;background:linear-gradient(#f6f7f7,#f1f2f3);"></div>
<span class="t fs" style="top:184.21px;font-size:32px;color:#31363b;letter-spacing:0.254px;left:5.5px;">Project Explorer</span>
<svg class="ic" style="left:416px;top:189px" width="104" height="48" viewBox="0 0 104 48"><path d="M20 11.500L32.500 24L20 36.500L7.500 24z" stroke="#8b8e90" stroke-width="2.200" fill="none"/><circle cx="75" cy="24" r="24" fill="#8f9295"/><path d="M63.500 12.500L86.500 35.500M86.500 12.500L63.500 35.500" stroke="#fcfcfc" stroke-width="2.200" fill="none"/></svg>
<div style="left:2px;top:244px;width:519px;height:1438px;background:#eff0f1;"></div>
<span class="t fs" style="top:243.91px;font-size:32px;color:#31363b;letter-spacing:0.239px;left:2px;">Search/Filter:</span>
<div style="left:196px;top:246px;width:277px;height:54px;background:#fcfcfc;border:1px solid #bcbec0;box-sizing:border-box;border-radius:4px;"></div>
<span class="t fs" style="top:243.91px;font-size:32px;color:#a0a3a5;letter-spacing:0.22px;left:202px;">Search/Filter...</span>
<div style="left:475px;top:250px;width:45px;height:46px;background:linear-gradient(#f4f5f5,#e9eaeb);border:1px solid #bcbec0;box-sizing:border-box;border-radius:4px;box-shadow:0 1px 1px rgba(0,0,0,.12);"></div>
<svg class="ic" style="left:485px;top:261px" width="24" height="24" viewBox="0 0 24 24"><rect x="0.500" y="0.500" width="23" height="23" fill="#fcfcfc" stroke="#31363b" stroke-width="1"/><rect x="0" y="0" width="24" height="4.500" fill="#31363b"/><rect x="3" y="7" width="5.500" height="14" fill="#31363b"/><path d="M11 8.500h10M11 13.500h8M11 18.500h5" stroke="#31363b" stroke-width="1.500"/></svg>
<div style="left:3px;top:302px;width:518px;height:1379px;background:#fcfcfc;border:1px solid #bcbec0;box-sizing:border-box;border-radius:3px;"></div>
<div style="left:4px;top:303px;width:516px;height:40px;background:#eff0f1;border-bottom:1px solid #d1d3d4;box-sizing:border-box;"></div>
<span class="t fs" style="top:293.91px;font-size:32px;color:#31363b;letter-spacing:0.879px;left:9.2px;">Name</span>
<svg class="ic" style="left:64px;top:346px;" width="48" height="48" viewBox="0 0 48 48"><defs><linearGradient id="fg" x1="0" y1="0" x2="0" y2="1"><stop offset="0" stop-color="#72c4f0"/><stop offset="1" stop-color="#3daee9"/></linearGradient></defs><path d="M3 3.800H20.600L23.400 7.300H44.900V20H3z" fill="#147eb8"/><path d="M1.100 15H16L19 12.200H46.900V43.300H1.100z" fill="url(#fg)"/><path d="M1.100 42.200H46.900V43.300H1.100z" fill="#2a90cd"/></svg>
<span class="t fs" style="top:340.81px;font-size:32px;color:#31363b;letter-spacing:0.349px;left:117.3px;">Project</span>
<div style="left:4px;top:397px;width:516px;height:54px;background:#eff0f1;"></div>
<div style="left:118px;top:397px;width:402px;height:54px;background:#c2e0f5;"></div>
<svg class="ic" style="left:121px;top:400px;" width="48" height="48" viewBox="0 0 22 22"><defs><linearGradient id="pb" x1="0" y1="0" x2="1" y2="1"><stop offset="0" stop-color="#5a9fd4"/><stop offset="1" stop-color="#306998"/></linearGradient><linearGradient id="py" x1="0" y1="0" x2="1" y2="1"><stop offset="0" stop-color="#ffe873"/><stop offset="1" stop-color="#ffc20e"/></linearGradient></defs><path d="M10.900 0.400C8.200 0.400 6.400 1.400 6.400 3.200V5.600h4.700v.7H4.400C2.100 6.300 0.400 8 0.400 11s1.500 4.800 3.600 4.800h1.900v-2.600c0-1.900 1.500-3.400 3.400-3.400h3.900c1.500 0 2.700-1.200 2.700-2.700V3.200c0-1.600-1.900-2.800-5-2.800z" fill="url(#pb)"/><circle cx="8.400" cy="3" r="0.950" fill="#fff"/><path d="M11.100 21.600c2.700 0 4.500-1 4.500-2.800v-2.400h-4.700v-.7h6.700c2.300 0 4-1.700 4-4.700s-1.500-4.800-3.600-4.800h-1.900v2.600c0 1.900-1.500 3.400-3.400 3.400H8.800c-1.500 0-2.700 1.200-2.700 2.700v3.900c0 1.600 1.900 2.800 5 2.800z" fill="url(#py)"/><circle cx="13.600" cy="19" r="0.950" fill="#fff"/></svg>
<span class="t fs" style="top:394.81px;font-size:32px;color:#31363b;letter-spacing:0.455px;left:173.9px;">Python 2</span>
<svg class="ic" style="left:178px;top:454px;" width="48" height="48" viewBox="0 0 22 22"><path d="M3 3h16v1H3zM3 5h9v1H3zM3 9h16v1H3zM3 11h10v1H3zM3 15h16v1H3zM3 17h13v1H3zM17 18h2v1h-2z" fill="#31363b" fill-rule="evenodd" /></svg>
<span class="t fs" style="top:448.81px;font-size:32px;color:#31363b;left:232.8px;">x</span>
<div style="left:4px;top:505px;width:516px;height:54px;background:#eff0f1;"></div>
<svg class="ic" style="left:178px;top:508px;" width="48" height="48" viewBox="0 0 22 22"><path d="M3 3h16v1H3zM3 5h9v1H3zM3 9h16v1H3zM3 11h10v1H3zM3 15h16v1H3zM3 17h13v1H3zM17 18h2v1h-2z" fill="#31363b" fill-rule="evenodd" /></svg>
<span class="t fs" style="top:502.81px;font-size:32px;color:#31363b;left:232.3px;">y</span>
<svg class="ic" style="left:178px;top:562px;" width="48" height="48" viewBox="0 0 22 22"><path d="M3 3h16v1H3zM3 5h9v1H3zM3 9h16v1H3zM3 11h10v1H3zM3 15h16v1H3zM3 17h13v1H3zM17 18h2v1h-2z" fill="#31363b" fill-rule="evenodd" /></svg>
<span class="t fs" style="top:556.81px;font-size:32px;color:#31363b;left:232.8px;transform:scaleX(1.0720);transform-origin:0 50%;">xf</span>
<div style="left:4px;top:613px;width:516px;height:54px;background:#eff0f1;"></div>
<svg class="ic" style="left:178px;top:616px;" width="48" height="48" viewBox="0 0 22 22"><path d="M3 3h16v1H3zM3 5h9v1H3zM3 9h16v1H3zM3 11h10v1H3zM3 15h16v1H3zM3 17h13v1H3zM17 18h2v1h-2z" fill="#31363b" fill-rule="evenodd" /></svg>
<span class="t fs" style="top:610.81px;font-size:32px;color:#31363b;letter-spacing:-0.676px;left:232.3px;">yf_abs</span>
<svg class="ic" style="left:178px;top:670px;" width="48" height="48" viewBox="0 0 22 22"><path d="M3 3h16v1H3zM3 5h9v1H3zM3 9h16v1H3zM3 11h10v1H3zM3 15h16v1H3zM3 17h13v1H3zM17 18h2v1h-2z" fill="#31363b" fill-rule="evenodd" /></svg>
<span class="t fs" style="top:664.81px;font-size:32px;color:#31363b;left:233.3px;">w</span>
<div style="left:4px;top:721px;width:516px;height:54px;background:#eff0f1;"></div>
<svg class="ic" style="left:178px;top:724px;" width="48" height="48" viewBox="0 0 22 22"><path d="M3 3h16v1H3zM3 5h9v1H3zM3 9h16v1H3zM3 11h10v1H3zM3 15h16v1H3zM3 17h13v1H3zM17 18h2v1h-2z" fill="#31363b" fill-rule="evenodd" /></svg>
<span class="t fs" style="top:718.81px;font-size:32px;color:#31363b;letter-spacing:-0.863px;left:232.8px;">xf_w</span>
<svg class="ic" style="left:178px;top:778px;" width="48" height="48" viewBox="0 0 22 22"><path d="M3 3h16v1H3zM3 5h9v1H3zM3 9h16v1H3zM3 11h10v1H3zM3 15h16v1H3zM3 17h13v1H3zM17 18h2v1h-2z" fill="#31363b" fill-rule="evenodd" /></svg>
<span class="t fs" style="top:772.81px;font-size:32px;color:#31363b;letter-spacing:-0.983px;left:232.3px;">yf_abs_w</span>
<div style="left:4px;top:829px;width:516px;height:54px;background:#eff0f1;"></div>
<svg class="ic" style="left:121px;top:832px;" width="48" height="48" viewBox="0 0 22 22"><path d="M6 3L2 7v1h5V3z" fill="#31363b" fill-rule="evenodd" /><path d="M6.500 3.500H19.500V7M2.500 7.500V18.500H5" fill="none" stroke="#31363b" stroke-width="1" /><path d="M7.500 9V18.500H18.700L16.300 14.700L14 17.200L10.200 13.500H7.500M7.500 11.500H10.200L14.100 7.500L16.100 10L18.600 7.400" fill="none" stroke="#31363b" stroke-width="1" /></svg>
<span class="t fs" style="top:826.81px;font-size:32px;color:#31363b;letter-spacing:0.366px;left:175.5px;">Worksheet</span>
<svg class="ic" style="left:178px;top:886px;" width="48" height="48" viewBox="0 0 22 22"><path d="M5 3.600V18.300M3.700 17H18.300M5 9.650H9L13 5.400L14.900 7.900L18.100 4.350M5 11.850H9L13 16L14.900 13.750L18.300 17" fill="none" stroke="#31363b" stroke-width="1" /></svg>
<span class="t fs" style="top:880.81px;font-size:32px;color:#31363b;letter-spacing:0.54px;left:232.8px;">xy-plot</span>
<div style="left:4px;top:937px;width:516px;height:54px;background:#eff0f1;"></div>
<svg class="ic" style="left:235px;top:940px;" width="48" height="48" viewBox="0 0 22 22"><path d="M4.500 3V19M3 17.500H19M8.500 15.200V17.500M12.500 15.200V17.500M16.500 15.200V17.500" fill="none" stroke="#31363b" stroke-width="1" /></svg>
<span class="t fs" style="top:934.81px;font-size:32px;color:#31363b;letter-spacing:-0.727px;left:289.9px;">x axis 1</span>
<svg class="ic" style="left:235px;top:994px;" width="48" height="48" viewBox="0 0 22 22"><path d="M4.500 3V19M3 17.500H19M8.500 15.200V17.500M12.500 15.200V17.500M16.500 15.200V17.500" fill="none" stroke="#31363b" stroke-width="1" /></svg>
<span class="t fs" style="top:988.81px;font-size:32px;color:#31363b;letter-spacing:-0.441px;left:289.9px;">x axis 2</span>
<div style="left:4px;top:1045px;width:516px;height:54px;background:#eff0f1;"></div>
<svg class="ic" style="left:235px;top:1048px;" width="48" height="48" viewBox="0 0 22 22"><path d="M4.500 3V19M3 17.500H19M4.500 3.500H7M4.500 8.200H7M4.500 12.900H7" fill="none" stroke="#31363b" stroke-width="1" /></svg>
<span class="t fs" style="top:1042.81px;font-size:32px;color:#31363b;letter-spacing:-0.584px;left:288.9px;">y axis 1</span>
<svg class="ic" style="left:235px;top:1102px;" width="48" height="48" viewBox="0 0 22 22"><path d="M4.500 3V19M3 17.500H19M4.500 3.500H7M4.500 8.200H7M4.500 12.900H7" fill="none" stroke="#31363b" stroke-width="1" /></svg>
<span class="t fs" style="top:1096.81px;font-size:32px;color:#31363b;letter-spacing:-0.298px;left:288.9px;">y axis 2</span>
<div style="left:4px;top:1153px;width:516px;height:54px;background:#eff0f1;"></div>
<svg class="ic" style="left:235px;top:1156px;" width="48" height="48" viewBox="0 0 22 22"><path d="M4.500 3V19M3 17.300H19M5.900 3.850L12.500 13.500L19 15.900M7 15.100L13.900 10.800L18.100 4" fill="none" stroke="#31363b" stroke-width="1" /></svg>
<span class="t fs" style="top:1150.81px;font-size:32px;color:#31363b;left:290.07px;transform:scaleX(0.8147);transform-origin:0 50%;">FFT</span>
<svg class="ic" style="left:235px;top:1210px;" width="48" height="48" viewBox="0 0 22 22"><path d="M4.500 3V19M3 17.300H19M5.900 3.850L12.500 13.500L19 15.900M7 15.100L13.900 10.800L18.100 4" fill="none" stroke="#31363b" stroke-width="1" /></svg>
<span class="t fs" style="top:1204.81px;font-size:32px;color:#31363b;left:290.07px;transform:scaleX(0.8147);transform-origin:0 50%;">FFT</span>
<span class="t fs" style="top:1204.81px;font-size:32px;color:#31363b;letter-spacing:0.756px;left:348.3px;">w.</span>
<span class="t fs" style="top:1204.81px;font-size:32px;color:#31363b;letter-spacing:0.638px;left:388.6px;">window</span>
<div style="left:4px;top:1261px;width:516px;height:54px;background:#eff0f1;"></div>
<svg class="ic" style="left:235px;top:1264px;" width="48" height="48" viewBox="0 0 22 22"><path d="M3.700 3.900H8.200M3.700 17.800H8.200M6 3.900V17.800" fill="none" stroke="#31363b" stroke-width="1" /><path d="M8.900 14.700V16.100H18V14.700" fill="none" stroke="#31363b" stroke-width="0.8" /></svg>
<span class="t fs" style="top:1258.81px;font-size:32px;color:#31363b;letter-spacing:0.921px;left:288.7px;">legend</span>
<svg class="ic" style="left:0;top:0" width="524" height="1728" viewBox="0 0 524 1728"><path d="M32.5 343V362.5M38 369.5H61M89.5 397V416.5M95 423.5H118M89.5 430.5V848.5M95 855.5H118M146.5 451V801.5M146.5 477.5H175M146.5 531.5H175M146.5 585.5H175M146.5 639.5H175M146.5 693.5H175M146.5 747.5H175M146.5 801.5H175M146.5 883V902.5M152 909.5H175M203.5 937V1287.5M203.5 963.5H232M203.5 1017.5H232M203.5 1071.5H232M203.5 1125.5H232M203.5 1179.5H232M203.5 1233.5H232M203.5 1287.5H232" stroke="#c6c8c9" stroke-width="1" fill="none"/><path d="M27.5 366.5L32.5 372.0L37.5 366.5M84.5 420.5L89.5 426.0L94.5 420.5M84.5 852.5L89.5 858.0L94.5 852.5M141.5 906.5L146.5 912.0L151.5 906.5" stroke="#4d5357" stroke-width="1.300" fill="none"/></svg>
<div style="left:0px;top:1684px;width:3200px;height:44px;background:#eff0f1;"></div>
<div style="left:0px;top:1726px;width:3200px;height:2px;background:linear-gradient(#c9cbcc,#9da0a2);"></div>
</div></body></html>
